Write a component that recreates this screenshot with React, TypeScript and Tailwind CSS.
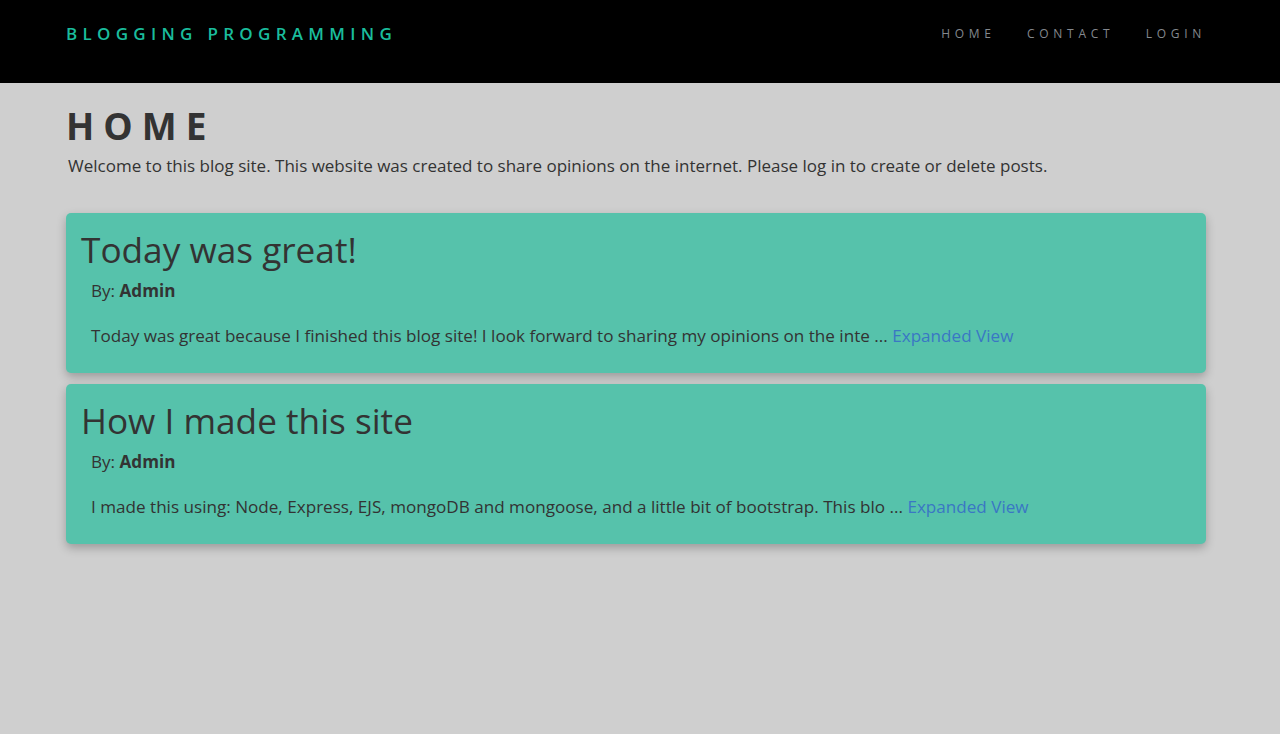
import React from 'react';

interface Post {
    title: string;
    author: string;
    excerpt: string;
}

const posts: Post[] = [
    {
        title: 'Today was great!',
        author: 'Admin',
        excerpt: 'Today was great because I finished this blog site! I look forward to sharing my opinions on the inte ...',
    },
    {
        title: 'How I made this site',
        author: 'Admin',
        excerpt: 'I made this using: Node, Express, EJS, mongoDB and mongoose, and a little bit of bootstrap. This blo ...',
    },
];

const PostCard: React.FC<{ post: Post }> = ({ post }) => (
    <div className="bg-[#56c2ab] rounded-[5px] shadow-[0_4px_10px_rgba(0,0,0,0.25)] h-[160px] pl-[15px] pt-[12px]">
        <h2 className="text-[35.2px] leading-[48px] text-[#333333]">{post.title}</h2>
        <p className="pl-[10px] text-[17.1px] leading-[26px] mt-[5px]">
            By: <span className="font-bold">{post.author}</span>
        </p>
        <p className="pl-[10px] text-[17.1px] leading-[26px] mt-[19px]">
            {post.excerpt} <a href="#" className="text-[#3a77c4]">Expanded View</a>
        </p>
    </div>
);

const App: React.FC = () => {
    return (
        <div className="min-h-[734px] bg-[#cfcfcf] text-[#333333] font-['Open_Sans',sans-serif]">
            <nav className="bg-black h-[83px] flex items-start justify-between pl-[66px] pr-[74px] pt-[22px]">
                <span className="text-[#1abc9c] text-[17px] font-semibold tracking-[5.3px] leading-[24px]">BLOGGING PROGRAMMING</span>
                <div className="flex gap-[31.5px] text-[#84888e] text-[12px] font-medium tracking-[4.7px] leading-[24px]">
                    <span>HOME</span>
                    <span>CONTACT</span>
                    <span>LOGIN</span>
                </div>
            </nav>
            <main className="ml-[66px] w-[1140px]">
                <h1 className="text-[37px] font-bold tracking-[9px] leading-[50px] mt-[18px] text-[#333333]">HOME</h1>
                <p className="text-[17px] leading-[26px] pl-[2px] mt-[2px]">
                    Welcome to this blog site. This website was created to share opinions on the internet. Please log in to create or delete posts.
                </p>
                <div className="flex flex-col gap-[11px] mt-[34px]">
                    {posts.map((p) => (
                        <PostCard key={p.title} post={p} />
                    ))}
                </div>
            </main>
        </div>
    );
};

export default App;
